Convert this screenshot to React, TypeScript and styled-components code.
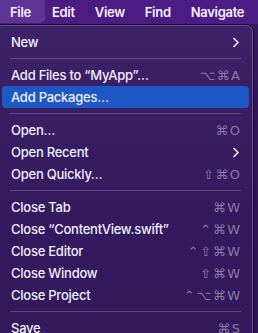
import React from "react";
import styled, { createGlobalStyle } from "styled-components";

const GlobalStyle = createGlobalStyle`
  html, body {
    margin: 0;
    padding: 0;
    background: #2b1452;
    overflow: hidden;
  }
  body {
    font-family: Inter, "Noto Sans", "Liberation Sans", sans-serif;
    -webkit-font-smoothing: antialiased;
  }
`;

const Screen = styled.div`
  width: 258px;
  height: 333px;
  overflow: hidden;
  background: linear-gradient(180deg, #321860 0%, #2b1452 100%);
`;

const MenuBar = styled.div`
  display: flex;
  align-items: center;
  height: 24px;
  background: linear-gradient(90deg, #4a1c80 0%, #4b1d86 100%);
`;

const BarItem = styled.div<{ $active?: boolean }>`
  display: flex;
  align-items: center;
  height: 23px;
  margin-top: -1px;
  padding: ${(p) => (p.$active ? "0 14px 0 10px" : "0 10px")};
  margin-right: ${(p) => (p.$active ? "-3px" : "0")};
  border-radius: 0 0 5px 0;
  background: ${(p) => (p.$active ? "#5d3396" : "transparent")};
  color: #f3eefb;
  font-size: 13px;
  font-weight: 600;
  letter-spacing: -0.3px;
`;

const Panel = styled.div`
  margin: 1px 0 0 -5px;
  width: 258px;
  padding: 5px 0 0;
  box-sizing: border-box;
  background: linear-gradient(180deg, #3c2368 0%, #33195e 60%, #321a5c 100%);
  border: 1px solid #6a5590;
  border-radius: 7px;
  box-shadow: 0 0 0 1px #1c0b38;
`;

const Row = styled.div<{ $active?: boolean }>`
  display: flex;
  align-items: center;
  height: 22px;
  margin: 0 3px 0 6px;
  padding: 0 9px;
  border-radius: 4px;
  background: ${(p) => (p.$active ? "#1d58c4" : "transparent")};
  color: #f1edf8;
  font-size: 13px;
  font-weight: 500;
  letter-spacing: -0.25px;
`;

const Label = styled.span`
  flex: 1;
  white-space: nowrap;
`;

const Shortcut = styled.span`
  color: #8a7aa6;
  font-family: "DejaVu Sans", "Liberation Sans", sans-serif;
  font-size: 13px;
  font-weight: 500;
  letter-spacing: 1.5px;
  margin-right: -1.5px;
  white-space: nowrap;
`;

const Separator = styled.div`
  height: 1px;
  margin: 5px 11px 5px 14px;
  background: #5b4682;
`;

const Chevron = () => (
  <svg width="8" height="11" viewBox="0 0 8 11" fill="none">
    <path d="M2 1.5 L6 5.5 L2 9.5" stroke="#e9e4f2" strokeWidth="1.7" strokeLinecap="round" strokeLinejoin="round" />
  </svg>
);

type Item =
  | { sep: true }
  | { label: string; shortcut?: string; sub?: boolean; active?: boolean };

const items: Item[] = [
  { label: "New", sub: true },
  { sep: true },
  { label: "Add Files to \u201CMyApp\u201D\u2026", shortcut: "\u2325\u2318A" },
  { label: "Add Packages\u2026", active: true },
  { sep: true },
  { label: "Open\u2026", shortcut: "\u2318O" },
  { label: "Open Recent", sub: true },
  { label: "Open Quickly\u2026", shortcut: "\u21E7\u2318O" },
  { sep: true },
  { label: "Close Tab", shortcut: "\u2318W" },
  { label: "Close \u201CContentView.swift\u201D", shortcut: "\u2303\u2318W" },
  { label: "Close Editor", shortcut: "\u2303\u21E7\u2318W" },
  { label: "Close Window", shortcut: "\u21E7\u2318W" },
  { label: "Close Project", shortcut: "\u2303\u2325\u2318W" },
  { sep: true },
  { label: "Save", shortcut: "\u2318S" },
];

export default function App() {
  return (
    <Screen>
      <GlobalStyle />
      <MenuBar>
        <BarItem $active>File</BarItem>
        <BarItem>Edit</BarItem>
        <BarItem>View</BarItem>
        <BarItem>Find</BarItem>
        <BarItem>Navigate</BarItem>
      </MenuBar>
      <Panel>
        {items.map((it, i) =>
          "sep" in it ? (
            <Separator key={i} />
          ) : (
            <Row key={i} $active={it.active}>
              <Label>{it.label}</Label>
              {it.shortcut && <Shortcut>{it.shortcut}</Shortcut>}
              {it.sub && <Chevron />}
            </Row>
          )
        )}
      </Panel>
    </Screen>
  );
}
